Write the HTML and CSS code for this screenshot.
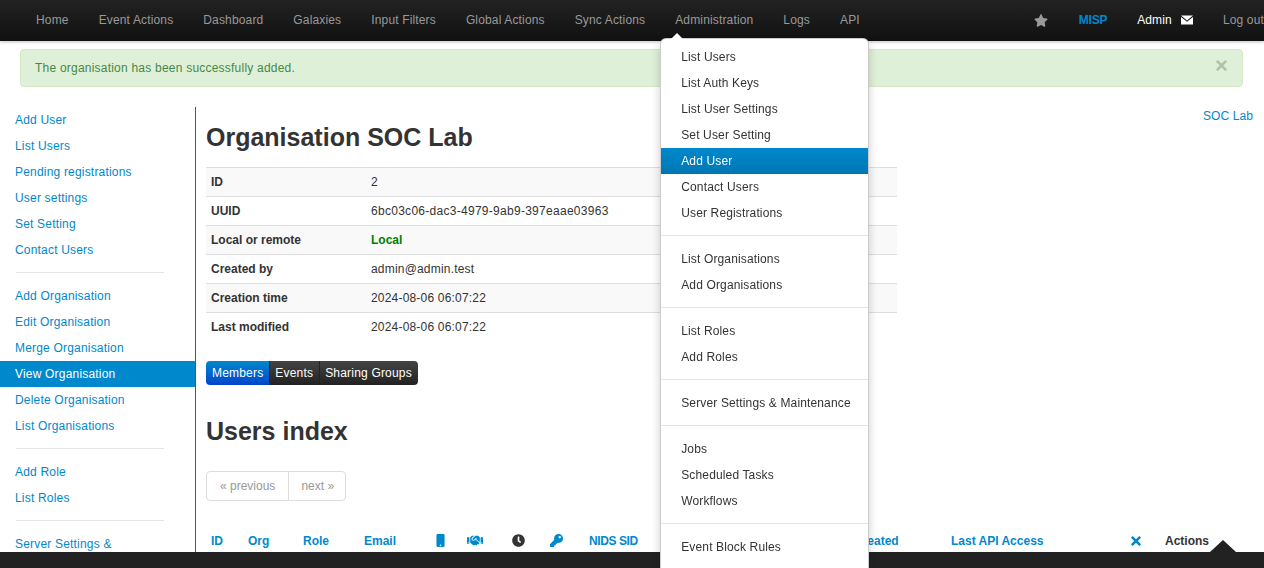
FILE: index.html
```html
<!DOCTYPE html>
<html lang="en">
<head>
<meta charset="utf-8">
<title>Organisation SOC Lab</title>
<link rel="stylesheet" href="styles.css">
</head>
<body>
<header class="topbar">
  <ul class="menu">
    <li class="menu-item">Home</li>
    <li class="menu-item">Event Actions</li>
    <li class="menu-item">Dashboard</li>
    <li class="menu-item">Galaxies</li>
    <li class="menu-item">Input Filters</li>
    <li class="menu-item">Global Actions</li>
    <li class="menu-item">Sync Actions</li>
    <li class="menu-item menu-open">Administration
      <ul class="dropdown">
        <li>List Users</li>
        <li>List Auth Keys</li>
        <li>List User Settings</li>
        <li>Set User Setting</li>
        <li class="dropdown-active">Add User</li>
        <li>Contact Users</li>
        <li>User Registrations</li>
        <li class="dropdown-divider"></li>
        <li>List Organisations</li>
        <li>Add Organisations</li>
        <li class="dropdown-divider"></li>
        <li>List Roles</li>
        <li>Add Roles</li>
        <li class="dropdown-divider"></li>
        <li>Server Settings &amp; Maintenance</li>
        <li class="dropdown-divider"></li>
        <li>Jobs</li>
        <li>Scheduled Tasks</li>
        <li>Workflows</li>
        <li class="dropdown-divider"></li>
        <li>Event Block Rules</li>
        <li class="dropdown-spacer"></li>
      </ul>
    </li>
    <li class="menu-item">Logs</li>
    <li class="menu-item">API</li>
  </ul>
  <ul class="menu menu-right">
    <li class="menu-item menu-star"><svg class="icon-star" viewBox="0 0 576 512"><path d="M259.3 17.8L194 150.2 47.9 171.5c-26.2 3.8-36.7 36.1-17.7 54.6l105.7 103-25 145.5c-4.5 26.3 23.2 46 46.4 33.7L288 439.6l130.7 68.7c23.2 12.2 50.9-7.4 46.4-33.7l-25-145.5 105.7-103c19-18.5 8.5-50.8-17.7-54.6L382 150.2 316.7 17.8c-11.7-23.6-45.6-23.9-57.4 0z"/></svg></li>
    <li class="menu-item menu-org">MISP</li>
    <li class="menu-item menu-user">Admin <svg class="icon-mail" viewBox="0 0 12 10"><path d="M0 0.6h12L6 5.4z"/><path d="M0 1.9V9.4h12V1.9L6 6.7z"/></svg></li>
    <li class="menu-item">Log out</li>
  </ul>
</header>

<div class="alert">
  <span>The organisation has been successfully added.</span>
  <span class="alert-close">×</span>
</div>

<div class="layout">
  <nav class="sidebar">
    <ul class="side-list">
      <li>Add User</li>
      <li>List Users</li>
      <li>Pending registrations</li>
      <li>User settings</li>
      <li>Set Setting</li>
      <li>Contact Users</li>
      <li class="side-divider"></li>
      <li>Add Organisation</li>
      <li>Edit Organisation</li>
      <li>Merge Organisation</li>
      <li class="side-active">View Organisation</li>
      <li>Delete Organisation</li>
      <li>List Organisations</li>
      <li class="side-divider"></li>
      <li>Add Role</li>
      <li>List Roles</li>
      <li class="side-divider"></li>
      <li>Server Settings &amp;</li>
    </ul>
  </nav>

  <main class="content">
    <a class="org-link">SOC Lab</a>
    <h2 class="title title-first">Organisation SOC Lab</h2>
    <table class="details">
      <tr><th>ID</th><td>2</td></tr>
      <tr><th>UUID</th><td class="value-uuid">6bc03c06-dac3-4979-9ab9-397eaae03963</td></tr>
      <tr><th>Local or remote</th><td class="value-local">Local</td></tr>
      <tr><th>Created by</th><td>admin@admin.test</td></tr>
      <tr><th>Creation time</th><td>2024-08-06 06:07:22</td></tr>
      <tr><th>Last modified</th><td>2024-08-06 06:07:22</td></tr>
    </table>

    <div class="tabs">
      <span class="tab tab-active">Members</span>
      <span class="tab">Events</span>
      <span class="tab">Sharing Groups</span>
    </div>

    <h2 class="title title-second">Users index</h2>

    <div class="pager">
      <span class="pager-item">« previous</span>
      <span class="pager-item">next »</span>
    </div>

    <div class="users-head">
      <span>ID</span>
      <span>Org</span>
      <span>Role</span>
      <span>Email</span>
      <span><svg class="icon-phone" viewBox="0 0 320 512"><path d="M272 0H48C21.5 0 0 21.5 0 48v416c0 26.500 21.500 48 48 48h224c26.500 0 48-21.500 48-48V48c0-26.500-21.500-48-48-48zM160 480c-17.700 0-32-14.300-32-32s14.300-32 32-32 32 14.300 32 32-14.300 32-32 32z"/></svg></span>
      <span><svg class="icon-hands" viewBox="0 0 640 512"><path d="M434.7 64h-85.9c-8 0-15.700 3-21.600 8.400l-98.300 90c-.1.1-.2.3-.3.4-16.600 15.600-16.300 40.500-2.100 56 12.700 13.900 39.400 17.600 56.100 2.700.1-.1.3-.1.4-.2l79.900-73.200c6.500-5.900 16.700-5.500 22.600 1 6 6.500 5.500 16.600-1 22.600l-26.100 23.900L504 313.800c2.900 2.400 5.500 5 7.900 7.700V128l-54.600-54.600c-5.900-6-14.100-9.400-22.600-9.400zM544 128.200v223.900c0 17.700 14.300 32 32 32h64V128.200h-96zm48 223.900c-8.800 0-16-7.200-16-16s7.200-16 16-16 16 7.200 16 16-7.200 16-16 16zM0 384h64c17.700 0 32-14.300 32-32V128.200H0V384zm48-63.900c8.800 0 16 7.200 16 16s-7.200 16-16 16-16-7.200-16-16c0-8.900 7.200-16 16-16zm435.900 18.600L334.600 217.500l-30 27.500c-29.700 27.100-75.200 24.500-101.700-4.400-26.900-29.400-24.800-74.900 4.400-101.600L289.100 64h-83.800c-8.500 0-16.600 3.400-22.600 9.400L128 128v223.900h18.300l90.500 81.900c27.400 22.300 67.700 18.100 90-9.300l.2-.2 17.900 15.500c15.900 13 39.400 10.500 52.300-5.400l31.400-38.600 5.400 4.400c13.700 11.100 33.900 9.100 45-4.700l9.500-11.700c11.200-13.800 9.100-33.900-4.600-45.100z"/></svg></span>
      <span><svg class="icon-clock" viewBox="0 0 512 512"><path d="M256,8C119,8,8,119,8,256S119,504,256,504,504,393,504,256,393,8,256,8Zm92.490,313h0l-20,25a16,16,0,0,1-22.490,2.500h0l-67-49.720a40,40,0,0,1-15-31.230V112a16,16,0,0,1,16-16h32a16,16,0,0,1,16,16V256l58,42.500A16,16,0,0,1,348.490,321Z"/></svg></span>
      <span><svg class="icon-key" viewBox="0 0 512 512"><path d="M512 176.001C512 273.203 433.202 352 336 352c-11.220 0-22.190-1.062-32.827-3.069l-24.012 27.014A23.999 23.999 0 0 1 261.223 384H224v40c0 13.255-10.745 24-24 24h-40v40c0 13.255-10.745 24-24 24H24c-13.255 0-24-10.745-24-24v-78.059c0-6.365 2.529-12.470 7.029-16.971l161.802-161.802C163.108 213.814 160 195.271 160 176 160 78.798 238.797.001 335.999 0 433.488-.001 512 78.511 512 176.001zM336 128c0 26.510 21.490 48 48 48s48-21.490 48-48-21.490-48-48-48-48 21.490-48 48z"/></svg></span>
      <span class="users-nids">NIDS SID</span>
      <span>Created</span>
      <span>Last API Access</span>
      <span><svg class="icon-times" viewBox="0 0 352 512"><path d="M242.720 256l100.070-100.070c12.280-12.280 12.280-32.190 0-44.480l-22.240-22.240c-12.280-12.280-32.190-12.280-44.480 0L176 189.280 75.930 89.210c-12.280-12.280-32.190-12.280-44.480 0L9.210 111.450c-12.280 12.280-12.280 32.190 0 44.480L109.280 256 9.210 356.070c-12.280 12.280-12.280 32.190 0 44.480l22.240 22.240c12.280 12.280 32.200 12.280 44.480 0L176 322.720l100.070 100.070c12.280 12.280 32.200 12.280 44.480 0l22.240-22.240c12.280-12.280 12.280-32.190 0-44.480L242.720 256z"/></svg></span>
      <span class="users-actions">Actions</span>
    </div>
  </main>
</div>

<footer class="bottombar"></footer>
</body>
</html>
```

FILE: styles.css
```css
* {
  box-sizing: border-box;
}

html,
body {
  height: 568px;
  margin: 0;
  overflow: hidden;
}

body {
  background: #fff;
  color: #333;
  font-family: "Liberation Sans", Arial, sans-serif;
  font-size: 12px;
  letter-spacing: 0.19px;
  line-height: 18px;
}

ul {
  list-style: none;
  margin: 0;
  padding: 0;
}

/* Top bar */
.topbar {
  background: linear-gradient(to bottom, #222, #111);
  box-shadow: 0 1px 3px rgba(0, 0, 0, 0.25);
  display: flex;
  height: 41px;
  letter-spacing: 0.15px;
  padding-left: 21px;
  position: relative;
  z-index: 10;
}

.menu {
  display: flex;
}

.menu-right {
  margin-left: auto;
  margin-right: -15px;
}

.menu-item {
  align-items: center;
  color: #999;
  display: flex;
  gap: 9px;
  height: 40px;
  padding: 0 15px;
  white-space: nowrap;
}

.menu-open {
  position: relative;
}

.menu-star {
  padding-right: 16px;
}

.menu-org {
  color: #0088cc;
  font-weight: 700;
  letter-spacing: -0.25px;
}

.menu-user {
  color: #fff;
}

.icon-star {
  display: block;
  fill: #999;
  height: 13px;
  width: 14px;
}

.icon-mail {
  display: block;
  fill: #fff;
  height: 10px;
  width: 12px;
}

/* Dropdown */
.dropdown {
  background: #fff;
  border: 1px solid rgba(0, 0, 0, 0.2);
  border-radius: 6px;
  box-shadow: 0 5px 10px rgba(0, 0, 0, 0.2);
  color: #333;
  left: 0;
  letter-spacing: 0.14px;
  padding-top: 5px;
  position: absolute;
  top: 38px;
  width: 209px;
}

.dropdown::before {
  border-bottom: 6px solid #fff;
  border-left: 6px solid transparent;
  border-right: 6px solid transparent;
  content: "";
  left: 10px;
  position: absolute;
  top: -6px;
}

.dropdown li {
  height: 26px;
  line-height: 26px;
  padding: 0 20px;
}

.dropdown .dropdown-active {
  background: linear-gradient(to bottom, #0088cc, #0077b3);
  color: #fff;
}

.dropdown .dropdown-divider {
  border-bottom: 1px solid #e5e5e5;
  height: 1px;
  margin: 9px 0 10px;
  padding: 0;
}

.dropdown .dropdown-spacer {
  height: 30px;
}

/* Alert */
.alert {
  align-items: center;
  background: #dff0d8;
  border: 1px solid #d6e9c6;
  border-radius: 4px;
  color: #468847;
  display: flex;
  height: 38px;
  justify-content: space-between;
  letter-spacing: 0.22px;
  margin: 8px 21px 0 20px;
  padding: 0 14px 0 14px;
}

.alert-close {
  color: #000;
  font-size: 22px;
  font-weight: 700;
  line-height: 18px;
  opacity: 0.2;
  position: relative;
  top: -2px;
}

/* Layout */
.layout {
  display: flex;
  margin-top: 20px;
}

.sidebar {
  border-right: 1px solid #555;
  flex: 0 0 196px;
  height: 445px;
  overflow: hidden;
}

.side-list li {
  color: #0088cc;
  line-height: 26px;
  min-height: 26px;
  padding: 0 15px;
}

.side-list .side-active {
  background: #0088cc;
  color: #fff;
}

.side-list .side-divider {
  border-bottom: 1px solid #e5e5e5;
  height: 1px;
  margin: 9px 31px 10px 16px;
  min-height: 0;
  padding: 0;
}

.content {
  flex: 1;
  min-width: 0;
  padding-left: 10px;
}

.org-link {
  color: #0088cc;
  float: right;
  letter-spacing: 0.1px;
  margin-right: 11px;
}

.title {
  font-size: 25px;
  font-weight: 700;
  letter-spacing: 0;
  line-height: 40px;
  margin: 0;
}

.title-first {
  margin: 10px 0;
}

.title-second {
  margin: 26px 0 20px;
}

/* Detail table */
.details {
  border-collapse: collapse;
  table-layout: fixed;
  width: 691px;
}

.details tr:nth-child(odd) {
  background: #f9f9f9;
}

.details th,
.details td {
  border-top: 1px solid #ddd;
  height: 29px;
  padding: 0 5px;
  text-align: left;
}

.details th {
  font-weight: 700;
  letter-spacing: 0;
  width: 160px;
}

.details .value-uuid {
  letter-spacing: 0.28px;
}

.details .value-local {
  color: #008000;
  font-weight: 700;
  letter-spacing: 0;
}

/* Tabs */
.tabs {
  border-radius: 4px;
  display: flex;
  height: 24px;
  margin-top: 19px;
  overflow: hidden;
  width: max-content;
}

.tab {
  background: linear-gradient(to bottom, #444, #222);
  border-left: 1px solid #222;
  color: #fff;
  line-height: 24px;
  padding: 0 6px 0 5px;
}

.tab-active {
  background: linear-gradient(to bottom, #0088cc, #0044cc);
  border-left: 0;
  padding-left: 6px;
}

/* Pagination */
.pager {
  border: 1px solid #ddd;
  border-radius: 4px;
  color: #999;
  display: flex;
  height: 30px;
  letter-spacing: 0;
  width: 140px;
}

.pager-item {
  line-height: 28px;
  padding: 0 12px;
  white-space: nowrap;
}

.pager-item:first-child {
  padding: 0 13px;
}

.pager-item + .pager-item {
  border-left: 1px solid #ddd;
}

/* Users table head */
.users-head {
  align-items: center;
  color: #0088cc;
  display: grid;
  font-weight: 700;
  grid-template-columns: 37px 55px 61px 72px 31px 45px 38px 39px 265px 97px 180px 34px 70px;
  height: 28px;
  letter-spacing: 0;
  margin-top: 26px;
}

.users-head span {
  padding-left: 5px;
  white-space: nowrap;
}

.users-head svg {
  display: block;
  fill: currentColor;
}

.users-head .users-nids {
  letter-spacing: -0.4px;
}

.users-head .users-actions {
  color: #333;
}

.icon-phone {
  height: 13px;
  width: 9px;
}

.icon-hands {
  height: 13px;
  width: 16px;
}

.users-head .icon-clock {
  fill: #333;
  height: 13px;
  width: 13px;
}

.icon-key {
  height: 13px;
  width: 13px;
}

.icon-times {
  height: 14px;
  width: 10px;
}

/* Bottom bar */
.bottombar {
  background: #222;
  bottom: 0;
  height: 16px;
  left: 0;
  position: fixed;
  right: 0;
  z-index: 5;
}

.bottombar::before {
  border-bottom: 12px solid #222;
  border-left: 13px solid transparent;
  border-right: 13px solid transparent;
  content: "";
  left: 1210px;
  position: absolute;
  top: -12px;
}
```
